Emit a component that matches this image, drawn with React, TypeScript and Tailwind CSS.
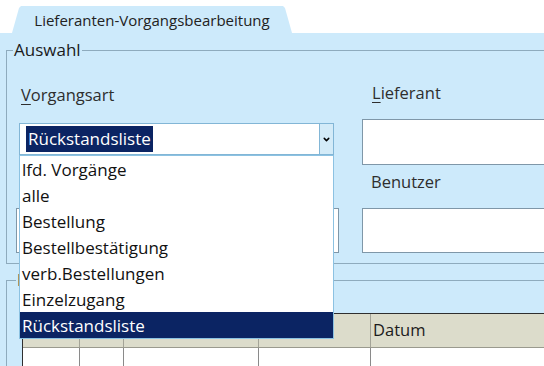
import { ChevronDown } from 'lucide-react';

const options = [
  'lfd. Vorgänge',
  'alle',
  'Bestellung',
  'Bestellbestätigung',
  'verb.Bestellungen',
  'Einzelzugang',
  'Rückstandsliste',
];

const selected = 'Rückstandsliste';

export default function App() {
  return (
    <div className="relative flex h-[366px] w-[544px] flex-col overflow-hidden bg-white font-['Open_Sans',sans-serif] text-[16.5px] text-[#1b1b1b]">
      {/* Tab strip */}
      <div className="h-[33px] shrink-0 pl-[12px] pt-[6px]">
        <div className="flex h-[27px] w-[280px] items-center justify-center bg-[#cdeafb] pt-[2px] text-[15px] text-[#222] [clip-path:polygon(0_100%,7px_2px,9px_0,calc(100%-9px)_0,calc(100%-7px)_2px,100%_100%)]">
          Lieferanten-Vorgangsbearbeitung
        </div>
      </div>

      {/* Panel */}
      <div className="flex-1 bg-[#cdeafb] pt-[17px]">
        {/* Auswahl group */}
        <div className="relative ml-[6px] h-[214px] w-[600px] border-y border-l border-[#8eabbd]">
          <span className="absolute left-[6px] top-[-12px] bg-[#cdeafb] px-[1px] text-[17px] leading-[22px] text-[#1b1b1b]">
            Auswahl
          </span>

          <div className="flex">
            {/* left column */}
            <div className="ml-[9px] flex w-[323px] flex-col">
              <label className="ml-[5px] mt-[33px] leading-[22px] text-[#2e2e2e]">
                <span className="underline underline-offset-[3px]">V</span>organgsart
              </label>
              <div className="ml-[3px] mt-[17px] flex h-[32px] w-[315px] border border-[#82b6d6] bg-white text-[17px]">
                <div className="flex flex-1 items-center pl-[6px]">
                  <span className="h-[26px] bg-[#0b2463] px-[2px] leading-[26px] text-white">{selected}</span>
                </div>
                <div className="flex w-[14px] items-center justify-center border-l border-[#82b6d6] bg-[#d3ebf8]">
                  <ChevronDown className="h-[9px] w-[9px] text-black" strokeWidth={4} />
                </div>
              </div>
              <div className="h-[53px]" />
              <div className="h-[45px] w-[323px] border border-[#7f97a8] bg-white" />
            </div>

            {/* right column */}
            <div className="ml-[23px] flex flex-1 flex-col">
              <label className="ml-[10px] mt-[31px] leading-[22px] text-[#2e2e2e]">
                <span className="underline underline-offset-[3px]">L</span>ieferant
              </label>
              <div className="mt-[15px] h-[46px] border border-[#7f97a8] bg-white" />
              <label className="ml-[9px] mt-[6px] leading-[22px] text-[#2e2e2e]">Benutzer</label>
              <div className="mt-[15px] h-[45px] border border-[#7f97a8] bg-white" />
            </div>
          </div>
        </div>

        {/* second group */}
        <div className="relative ml-[6px] mt-[16px] h-[200px] w-[600px] border-l border-t border-[#8eabbd]">
          <span className="absolute left-[9px] top-[-12px] bg-[#cdeafb] px-[1px] leading-[22px]">Liste</span>

          <div className="ml-[15px] mt-[32px] border-l border-t border-[#2f2f2f]">
            <div className="grid h-[34px] grid-cols-[56px_44px_135px_112px_1fr] border-b border-[#9a9a8e] bg-[#dcdccb]">
              <div />
              <div className="border-l border-[#a3a397]" />
              <div className="border-l border-[#a3a397]" />
              <div className="border-l border-[#a3a397]" />
              <div className="border-l border-[#a3a397] pl-[2px] pt-[2px] leading-[28px]">Datum</div>
            </div>
            <div className="grid h-[40px] grid-cols-[56px_44px_135px_112px_1fr] bg-white">
              <div />
              <div className="border-l border-[#8a8a8a]" />
              <div className="border-l border-[#8a8a8a]" />
              <div className="border-l border-[#8a8a8a]" />
              <div className="border-l border-[#8a8a8a]" />
            </div>
          </div>
        </div>
      </div>

      {/* open dropdown list */}
      <ul className="absolute left-[19px] top-[155px] h-[184px] w-[315px] border border-[#8cc2e2] bg-white text-[17px]">
        {options.map((option) => (
          <li
            key={option}
            className={
              option === selected
                ? 'h-[26px] bg-[#0b2463] pl-[2px] pt-[2px] leading-[24px] text-white'
                : 'h-[26px] pl-[2px] pt-[2px] leading-[24px] text-[#111]'
            }
          >
            {option}
          </li>
        ))}
      </ul>
    </div>
  );
}
